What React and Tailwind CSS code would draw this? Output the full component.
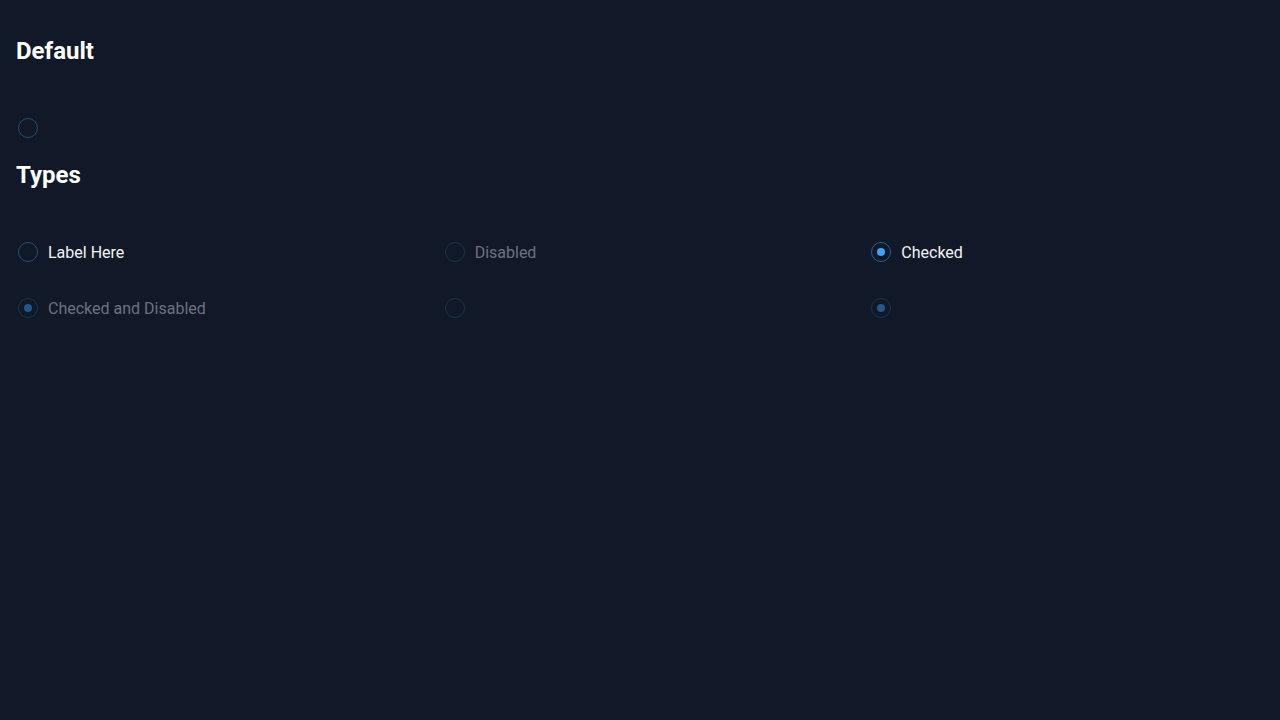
import React from 'react';

// Radio showcase — dark theme, three-column grid of radio states.

function Radio({ label, checked = false, disabled = false }) {
    const ring = disabled
        ? 'border-[#173651]'
        : checked
          ? 'border-[#245f93]'
          : 'border-[#1f5078]';
    const dot = disabled ? 'bg-[#24578a]' : 'bg-[#3fa2f7]';

    return (
        <label className="flex items-center h-10">
            <span
                className={`ml-0.5 mb-0.5 w-5 h-5 shrink-0 rounded-full border ${ring} flex items-center justify-center`}
            >
                {checked && <span className={`w-2 h-2 rounded-full ${dot}`} />}
            </span>
            {label && (
                <span
                    className={`ml-2.5 text-base leading-6 ${disabled ? 'text-[#6b7280]' : 'text-[#f3f4f6]'}`}
                >
                    {label}
                </span>
            )}
        </label>
    );
}

export default function App() {
    return (
        <div
            className="min-h-screen bg-[#111827] pt-[35px]"
            style={{ fontFamily: 'Roboto, "Noto Sans", sans-serif' }}
        >
            <h2 className="px-4 h-8 text-2xl leading-8 font-bold text-white">Default</h2>
            <div className="px-4 mt-[42px]">
                <Radio />
            </div>

            <h2 className="px-4 mt-[10px] h-8 text-2xl leading-8 font-bold text-white">Types</h2>
            <div className="grid grid-cols-3 gap-y-4 mt-[42px]">
                <div className="px-4">
                    <Radio label="Label Here" />
                </div>
                <div className="px-4">
                    <Radio label="Disabled" disabled />
                </div>
                <div className="px-4">
                    <Radio label="Checked" checked />
                </div>
                <div className="px-4">
                    <Radio label="Checked and Disabled" checked disabled />
                </div>
                <div className="px-4">
                    <Radio disabled />
                </div>
                <div className="px-4">
                    <Radio checked disabled />
                </div>
            </div>
        </div>
    );
}
